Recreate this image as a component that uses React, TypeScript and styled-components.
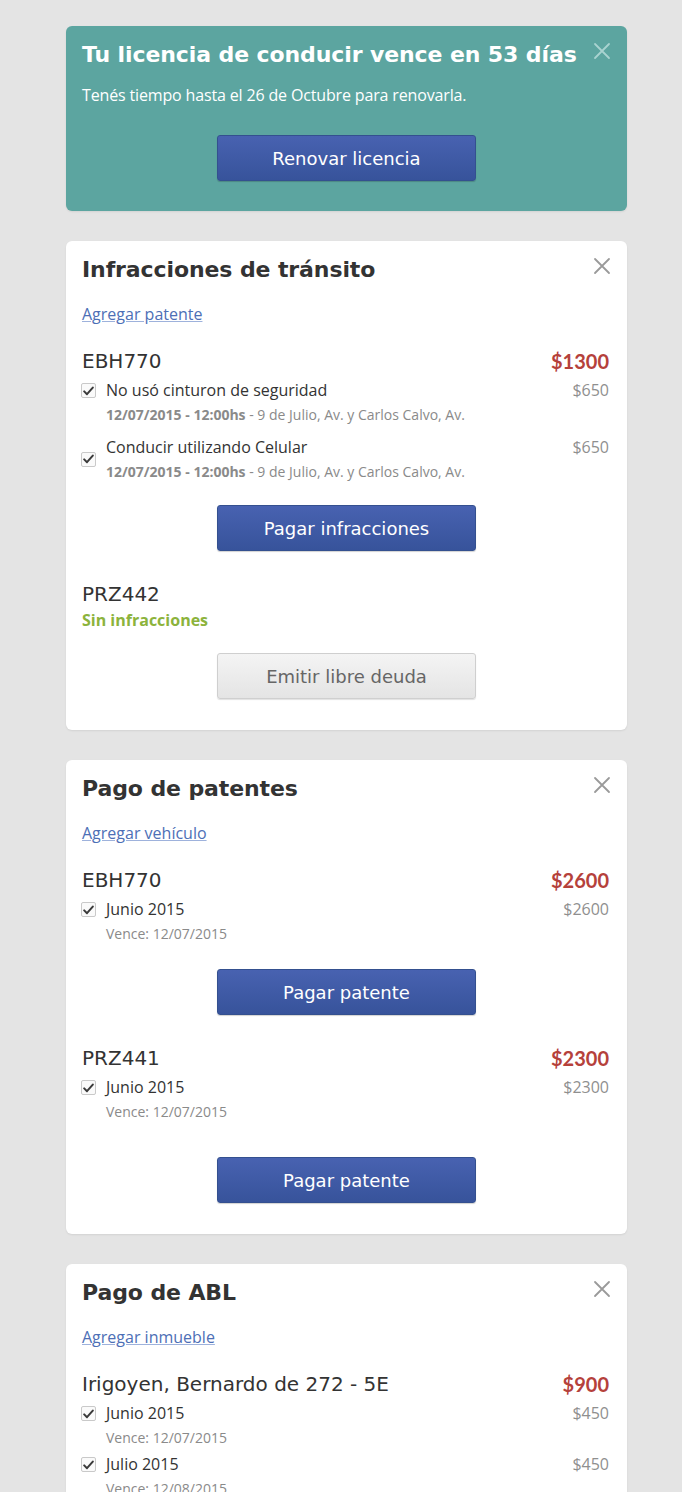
import React from "react";
import styled, { createGlobalStyle } from "styled-components";

const Global = createGlobalStyle`
  html, body { margin: 0; padding: 0; background: #e4e4e4; }
  body { font-family: "Open Sans", "Liberation Sans", sans-serif; }
  * { box-sizing: border-box; }
`;

const Page = styled.div`
  width: 682px;
  padding: 26px 55px 30px 66px;
  display: flex;
  flex-direction: column;
  gap: 30px;
`;

const Card = styled.section<{ $tone?: "alert" | "plain" }>`
  position: relative;
  width: 561px;
  border-radius: 6px;
  padding: 16px 18px ${(p) => (p.$tone === "alert" ? "16px" : "17px")} 16px;
  background: ${(p) => (p.$tone === "alert" ? "#5ca5a0" : "#ffffff")};
  color: ${(p) => (p.$tone === "alert" ? "#ffffff" : "#333333")};
  box-shadow: 0 1px 2px rgba(0, 0, 0, 0.08);
`;

const Title = styled.h2`
  margin: 0;
  font-family: "DejaVu Sans", "Liberation Sans", sans-serif;
  font-weight: 700;
  font-size: 22px;
  line-height: 26px;
  letter-spacing: -0.1px;
  padding-right: 30px;
`;

const Close = styled.button<{ $light?: boolean }>`
  position: absolute;
  top: 16px;
  right: 16px;
  width: 18px;
  height: 18px;
  padding: 0;
  border: 0;
  background: none;
  color: ${(p) => (p.$light ? "#a9d3d0" : "#9a9a9a")};
  cursor: pointer;
  svg { display: block; }
`;

const Subtitle = styled.p`
  margin: 17px 0 0;
  font-size: 16px;
  line-height: 20px;
  letter-spacing: -0.15px;
`;

const Link = styled.a`
  display: inline-block;
  margin-top: 21px;
  font-size: 16px;
  line-height: 20px;
  color: #4d6fb6;
  text-decoration: underline;
  text-decoration-color: #9eb2dc;
  text-underline-offset: 1px;
`;

const Group = styled.div<{ $first?: boolean }>`
  margin-top: ${(p) => (p.$first ? "24px" : "31px")};
`;

const GroupHead = styled.div`
  display: flex;
  justify-content: space-between;
  align-items: center;
  font-family: "DejaVu Sans", "Liberation Sans", sans-serif;
  font-size: 20px;
  line-height: 24px;
  color: #333;
`;

const Total = styled.span`
  font-family: "Lato", "Liberation Sans", sans-serif;
  font-size: 20px;
  font-weight: 700;
  color: #b5413b;
`;

const Status = styled.div`
  margin-top: 4px;
  font-size: 16px;
  line-height: 20px;
  font-weight: 700;
  color: #8cb33c;
`;

const Item = styled.div<{ $center?: boolean }>`
  display: grid;
  grid-template-columns: 15px 1fr auto;
  column-gap: 10px;
  align-items: ${(p) => (p.$center ? "center" : "start")};
  margin-top: ${(p) => (p.$center ? "13px" : "7px")};
  margin-left: -1px;
`;

const Box = styled.span<{ $center?: boolean }>`
  width: 15px;
  height: 15px;
  margin-top: ${(p) => (p.$center ? "0" : "3px")};
  border: 1px solid #c9c9c9;
  border-radius: 2px;
  background: #fafafa;
  display: flex;
  align-items: center;
  justify-content: center;
  grid-row: 1;
  svg { display: block; }
`;

const ItemText = styled.div`
  min-width: 0;
`;

const ItemName = styled.div`
  font-size: 16px;
  line-height: 20px;
  color: #333;
`;

const Meta = styled.div`
  margin-top: 6px;
  font-size: 14px;
  line-height: 18px;
  color: #8a8a8a;
  b { font-weight: 700; }
`;

const Price = styled.span`
  align-self: start;
  font-size: 16px;
  line-height: 20px;
  color: #8f8f8f;
`;

const ButtonRow = styled.div<{ $top?: number }>`
  display: flex;
  justify-content: center;
  margin: ${(p) => p.$top ?? 24}px 0 14px;
`;

const Button = styled.button<{ $variant?: "primary" | "muted" }>`
  width: 259px;
  height: 46px;
  margin-left: 2px;
  border-radius: 3px;
  font-family: "DejaVu Sans", "Liberation Sans", sans-serif;
  font-size: 18px;
  cursor: pointer;
  ${(p) =>
    p.$variant === "muted"
      ? `
    color: #666;
    background: linear-gradient(#f4f4f4, #e4e4e4);
    border: 1px solid #cfcfcf;
    box-shadow: 0 1px 1px rgba(0,0,0,0.12);
  `
      : `
    color: #fff;
    background: linear-gradient(#4862b1, #37539b);
    border: 1px solid #34508f;
    box-shadow: 0 1px 1px rgba(0,0,0,0.18);
  `}
`;

const X = () => (
  <svg width="18" height="18" viewBox="0 0 18 18" fill="none">
    <path d="M2 2L16 16M16 2L2 16" stroke="currentColor" strokeWidth="1.8" strokeLinecap="round" />
  </svg>
);

const Check = () => (
  <svg width="11" height="10" viewBox="0 0 11 10">
    <path d="M1.2 5.4L4 8.2L9.8 1.6" stroke="#3a3a3a" strokeWidth="2" fill="none" strokeLinecap="round" strokeLinejoin="round" />
  </svg>
);

type Entry = { name: string; price: string; meta: React.ReactNode; center?: boolean };

const Row = ({ e }: { e: Entry }) => (
  <Item $center={e.center}>
    <Box $center={e.center}>
      <Check />
    </Box>
    <ItemText>
      <ItemName>{e.name}</ItemName>
      <Meta>{e.meta}</Meta>
    </ItemText>
    <Price>{e.price}</Price>
  </Item>
);

const infraMeta = (
  <>
    <b>12/07/2015 - 12:00hs</b> - 9 de Julio, Av. y Carlos Calvo, Av.
  </>
);

export default function App() {
  return (
    <>
      <Global />
      <Page>
        <Card $tone="alert">
          <Title>Tu licencia de conducir vence en 53 días</Title>
          <Close $light aria-label="cerrar">
            <X />
          </Close>
          <Subtitle>Tenés tiempo hasta el 26 de Octubre para renovarla.</Subtitle>
          <ButtonRow $top={30}>
            <Button>Renovar licencia</Button>
          </ButtonRow>
        </Card>

        <Card>
          <Title>Infracciones de tránsito</Title>
          <Close aria-label="cerrar">
            <X />
          </Close>
          <Link href="#">Agregar patente</Link>
          <Group $first>
            <GroupHead>
              <span>EBH770</span>
              <Total>$1300</Total>
            </GroupHead>
            <Row e={{ name: "No usó cinturon de seguridad", price: "$650", meta: infraMeta }} />
            <Row e={{ name: "Conducir utilizando Celular", price: "$650", meta: infraMeta, center: true }} />
            <ButtonRow>
              <Button>Pagar infracciones</Button>
            </ButtonRow>
          </Group>
          <Group>
            <GroupHead>
              <span>PRZ442</span>
            </GroupHead>
            <Status>Sin infracciones</Status>
            <ButtonRow $top={23}>
              <Button $variant="muted">Emitir libre deuda</Button>
            </ButtonRow>
          </Group>
        </Card>

        <Card>
          <Title>Pago de patentes</Title>
          <Close aria-label="cerrar">
            <X />
          </Close>
          <Link href="#">Agregar vehículo</Link>
          <Group $first>
            <GroupHead>
              <span>EBH770</span>
              <Total>$2600</Total>
            </GroupHead>
            <Row e={{ name: "Junio 2015", price: "$2600", meta: "Vence: 12/07/2015" }} />
            <ButtonRow $top={26}>
              <Button>Pagar patente</Button>
            </ButtonRow>
          </Group>
          <Group>
            <GroupHead>
              <span>PRZ441</span>
              <Total>$2300</Total>
            </GroupHead>
            <Row e={{ name: "Junio 2015", price: "$2300", meta: "Vence: 12/07/2015" }} />
            <ButtonRow $top={36}>
              <Button>Pagar patente</Button>
            </ButtonRow>
          </Group>
        </Card>

        <Card>
          <Title>Pago de ABL</Title>
          <Close aria-label="cerrar">
            <X />
          </Close>
          <Link href="#">Agregar inmueble</Link>
          <Group $first>
            <GroupHead>
              <span>Irigoyen, Bernardo de 272 - 5E</span>
              <Total>$900</Total>
            </GroupHead>
            <Row e={{ name: "Junio 2015", price: "$450", meta: "Vence: 12/07/2015" }} />
            <Row e={{ name: "Julio 2015", price: "$450", meta: "Vence: 12/08/2015" }} />
            <ButtonRow>
              <Button>Pagar ABL</Button>
            </ButtonRow>
          </Group>
        </Card>
      </Page>
    </>
  );
}
